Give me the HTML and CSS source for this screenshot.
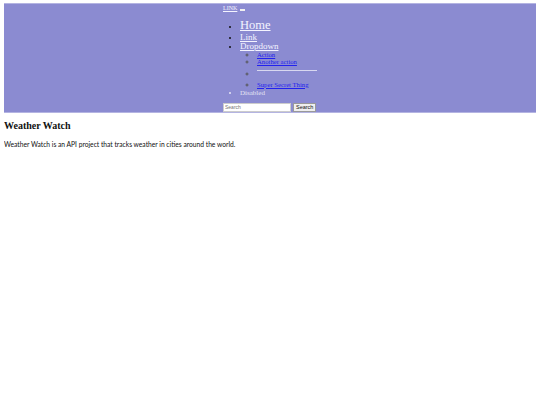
FILE: index.html
```html
<!DOCTYPE html>
<html lang="en">
<head>
  <meta charset="UTF-8">
  <meta name="viewport" content="width=device-width, initial-scale=1.0">
  <title>Weather Watch</title>
  <link rel="stylesheet" href="styles.css">
</head>
<body>
  <nav class="navbar">
    <div class="nav-inner">
      <div class="brand-row">
        <a href="#" class="brand">LINK</a>
        <button class="toggler"></button>
      </div>
      <ul class="nav-links">
        <li class="home"><a href="#">Home</a></li>
        <li><a href="#">Link</a></li>
        <li>
          <a href="#">Dropdown</a>
          <ul class="dropdown">
            <li><a href="#">Action</a></li>
            <li><a href="#">Another action</a></li>
            <li><hr></li>
            <li><a href="#">Super Secret Thing</a></li>
          </ul>
        </li>
        <li class="disabled">Disabled</li>
      </ul>
      <form class="search">
        <input type="text" placeholder="Search">
        <button type="button">Search</button>
      </form>
    </div>
  </nav>

  <div class="content">
    <h3>Weather Watch</h3>
    <p>Weather Watch is an API project that tracks weather in cities around the world.</p>
  </div>
</body>
</html>
```

FILE: styles.css
```css
:root {
  --nav-bg: #8b8bd1;
  --nav-border: #b4b4e2;
  --link-light: #f4f4ff;
  --link-blue: #2222ee;
}

body {
  margin: 3px 4px;
  font-family: 'Liberation Serif', serif;
  font-size: 8px;
  color: #111;
}

.navbar {
  margin: 0 -1px;
  background: var(--nav-bg);
  border: 1px solid var(--nav-border);
  display: flex;
  justify-content: center;
}

.nav-inner {
  width: 94px;
}

.brand-row {
  display: flex;
  align-items: flex-end;
  gap: 3px;
  height: 7px;
  padding-top: 1px;
}

.brand {
  color: var(--link-light);
  font-size: 6px;
  line-height: 7px;
}

.toggler {
  width: 5px;
  height: 2px;
  padding: 0;
  border: none;
  background: #f0f0f0;
  margin-bottom: 1px;
}

.nav-links {
  margin: 6px 0 5px;
  padding-left: 17px;
  color: #111;
  font-size: 9px;
  line-height: 9px;
}

.nav-links > li::marker {
  font-size: 7px;
}

.nav-links a {
  color: var(--link-light);
}

.nav-links .home {
  line-height: 14px;
}

.nav-links .home a {
  font-size: 12.5px;
}

.dropdown {
  padding-left: 17px;
  margin: 0;
  list-style: circle;
  font-size: 6.7px;
  line-height: 7px;
}

.dropdown li::marker {
  color: #555;
  font-size: 8px;
}

.dropdown a {
  color: var(--link-blue);
}

.dropdown hr {
  margin: 5px 0 3.5px;
  width: 60px;
  border: none;
  border-top: 1px solid #d8d8f0;
}

.nav-links .disabled {
  color: #e4e4f4;
  font-size: 7px;
  line-height: 10px;
}

.search {
  display: flex;
  gap: 2px;
  margin: 0;
}

.search input {
  width: 64px;
  height: 7px;
  padding: 0 1px;
  font-family: 'Liberation Sans', sans-serif;
  font-size: 5px;
  border: 1px solid #ccc;
  background: #fff;
}

.search button {
  height: 9px;
  padding: 0 2px;
  font-family: 'Liberation Sans', sans-serif;
  font-size: 5.5px;
  border: 1px solid #999;
  background: #efefef;
  color: #111;
}

.content h3 {
  font-size: 10px;
  margin: 7px 0 9px;
}

.content p {
  font-family: Lato, sans-serif;
  font-size: 6.7px;
  margin: 0;
}
```
